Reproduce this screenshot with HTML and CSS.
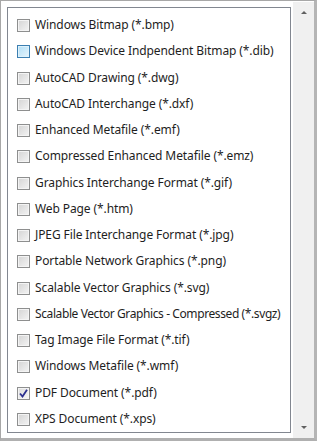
FILE: index.html
```html
<!DOCTYPE html>
<html>

<head>
    <title>Export Formats</title>
    <link rel="stylesheet" href="styles.css">
</head>

<body>
    <div class="popup">
        <div class="list">
            <label class="item"><span class="box"></span>Windows Bitmap (*.bmp)</label>
            <label class="item"><span class="box hover"></span>Windows Device Indpendent Bitmap (*.dib)</label>
            <label class="item"><span class="box"></span>AutoCAD Drawing (*.dwg)</label>
            <label class="item"><span class="box"></span>AutoCAD Interchange (*.dxf)</label>
            <label class="item"><span class="box"></span>Enhanced Metafile (*.emf)</label>
            <label class="item"><span class="box"></span>Compressed Enhanced Metafile (*.emz)</label>
            <label class="item"><span class="box"></span>Graphics Interchange Format (*.gif)</label>
            <label class="item"><span class="box"></span>Web Page (*.htm)</label>
            <label class="item"><span class="box"></span>JPEG File Interchange Format (*.jpg)</label>
            <label class="item"><span class="box"></span>Portable Network Graphics (*.png)</label>
            <label class="item"><span class="box"></span>Scalable Vector Graphics (*.svg)</label>
            <label class="item tight"><span class="box"></span>Scalable Vector Graphics - Compressed (*.svgz)</label>
            <label class="item"><span class="box"></span>Tag Image File Format (*.tif)</label>
            <label class="item"><span class="box"></span>Windows Metafile (*.wmf)</label>
            <label class="item"><span class="box checked">
                    <svg width="9" height="9" viewBox="0 0 9 9">
                        <path d="M1 4.5 L3.5 7.5 L8 0.8" fill="none" stroke="#2b2f8f" stroke-width="1.8" />
                    </svg>
                </span>PDF Document (*.pdf)</label>
            <label class="item"><span class="box"></span>XPS Document (*.xps)</label>
        </div>
        <div class="scrollbar">
            <span class="arrow up"></span>
            <span class="arrow down"></span>
        </div>
    </div>
</body>

</html>
```

FILE: styles.css
```css
body {
    margin: 0;
    background-color: #fff;
    font-family: "Noto Sans", "Open Sans", sans-serif;
    font-size: 12px;
    color: #1e1e1e;
}

.popup {
    width: 317px;
    height: 441px;
    box-sizing: border-box;
    border: 1px solid #a7a7a7;
    border-right: 3px solid #b5b5b5;
    border-bottom: 3px solid #b0b0b0;
    background-color: #fff;
    display: flex;
    padding: 6px 0 5px 6px;
}

.list {
    flex: 1;
    border: 1px solid #828790;
    padding: 10px 0 0 9px;
    display: flex;
    flex-direction: column;
    overflow: hidden;
}

.item {
    flex-shrink: 0;
    height: 26.27px;
    display: flex;
    align-items: flex-start;
    white-space: nowrap;
    line-height: 14px;
    letter-spacing: -0.1px;
}

.item.tight {
    letter-spacing: -0.4px;
}

.box {
    flex-shrink: 0;
    width: 11px;
    height: 11px;
    border: 1px solid #8e8f8f;
    background: linear-gradient(135deg, #d4d4d4, #f4f4f4);
    box-shadow: inset 0 0 0 1px #f4f4f4;
    margin: 1px 5px 0 0;
    display: flex;
    align-items: center;
    justify-content: center;
}

.box.hover {
    border-color: #3c7fb1;
    background: linear-gradient(135deg, #b1dff7, #e6f4fc);
    box-shadow: inset 0 0 0 1px #def2fc;
}

.box.checked {
    background: linear-gradient(135deg, #dcdcdc, #f6f6f6);
}

.scrollbar {
    width: 21px;
    margin: -5px 0 -5px 2px;
    background-color: #f0f0f0;
    position: relative;
}

.arrow {
    position: absolute;
    left: 8px;
    width: 0;
    height: 0;
    border-left: 3px solid transparent;
    border-right: 3px solid transparent;
}

.arrow.up {
    top: 9px;
    border-bottom: 3px solid #606060;
}

.arrow.down {
    bottom: 9px;
    border-top: 3px solid #606060;
}
```
